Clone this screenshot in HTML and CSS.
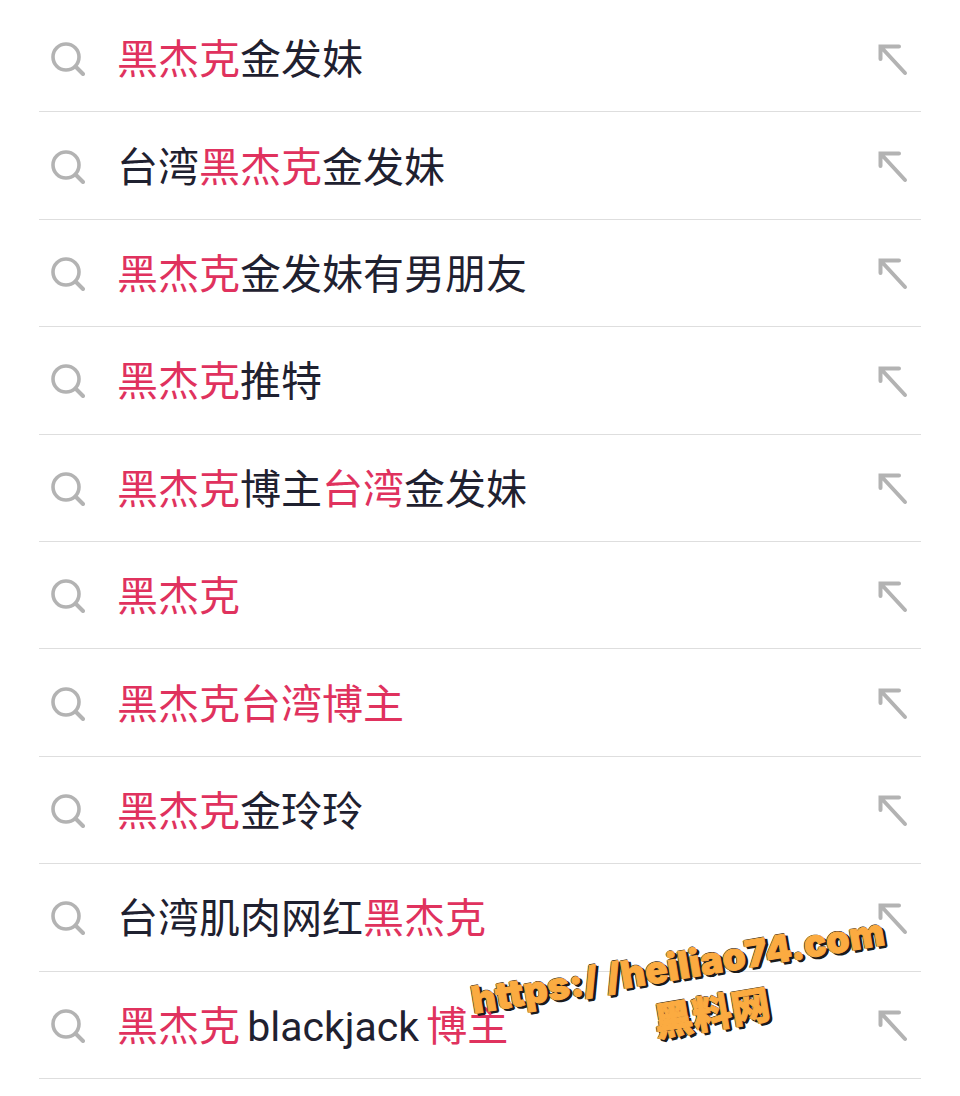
FILE: index.html
```html
<!DOCTYPE html>
<html lang="zh-CN">
<head>
    <meta charset="UTF-8">
    <title>搜索建议</title>
    <link rel="stylesheet" href="styles.css">
</head>
<body>
    <svg class="icon-defs" width="0" height="0">
        <symbol id="search" viewBox="0 0 34 34">
            <circle cx="15" cy="15" r="13" fill="none" stroke="currentColor" stroke-width="3.600"/>
            <path d="M25 25l7 7" fill="none" stroke="currentColor" stroke-width="4" stroke-linecap="round"/>
        </symbol>
        <symbol id="arrow" viewBox="0 0 32 32">
            <path d="M3.500 15V2.500H22M4 3L28 29" fill="none" stroke="currentColor" stroke-width="4" stroke-linecap="round"/>
        </symbol>
    </svg>

    <ul class="list">
        <li class="row"><svg class="ico-search"><use href="#search"/></svg><span class="text"><em>黑杰克</em>金发妹</span><svg class="ico-arrow"><use href="#arrow"/></svg></li>
        <li class="row"><svg class="ico-search"><use href="#search"/></svg><span class="text">台湾<em>黑杰克</em>金发妹</span><svg class="ico-arrow"><use href="#arrow"/></svg></li>
        <li class="row"><svg class="ico-search"><use href="#search"/></svg><span class="text"><em>黑杰克</em>金发妹有男朋友</span><svg class="ico-arrow"><use href="#arrow"/></svg></li>
        <li class="row"><svg class="ico-search"><use href="#search"/></svg><span class="text"><em>黑杰克</em>推特</span><svg class="ico-arrow"><use href="#arrow"/></svg></li>
        <li class="row"><svg class="ico-search"><use href="#search"/></svg><span class="text"><em>黑杰克</em>博主<em>台湾</em>金发妹</span><svg class="ico-arrow"><use href="#arrow"/></svg></li>
        <li class="row"><svg class="ico-search"><use href="#search"/></svg><span class="text"><em>黑杰克</em></span><svg class="ico-arrow"><use href="#arrow"/></svg></li>
        <li class="row"><svg class="ico-search"><use href="#search"/></svg><span class="text"><em>黑杰克台湾博主</em></span><svg class="ico-arrow"><use href="#arrow"/></svg></li>
        <li class="row"><svg class="ico-search"><use href="#search"/></svg><span class="text"><em>黑杰克</em>金玲玲</span><svg class="ico-arrow"><use href="#arrow"/></svg></li>
        <li class="row"><svg class="ico-search"><use href="#search"/></svg><span class="text">台湾肌肉网红<em>黑杰克</em></span><svg class="ico-arrow"><use href="#arrow"/></svg></li>
        <li class="row"><svg class="ico-search"><use href="#search"/></svg><span class="text"><em>黑杰克</em> blackjack <em>博主</em></span><svg class="ico-arrow"><use href="#arrow"/></svg></li>
    </ul>

    <div class="watermark">
        <div class="wm-url">https:/ /heiliao74.com</div>
        <div class="wm-name">黑料网</div>
    </div>
</body>
</html>
```

FILE: styles.css
```css
html, body {
    margin: 0;
    padding: 0;
    background: #fff;
    overflow: hidden;
}

body {
    width: 960px;
    height: 1096px;
    position: relative;
    font-family: Roboto, "Noto Sans CJK SC", sans-serif;
}

.icon-defs {
    position: absolute;
}

.list {
    list-style: none;
    margin: 0;
    padding: 5px 39px 0;
}

.row {
    display: flex;
    align-items: center;
    height: 106.4px;
    border-bottom: 1px solid #dedede;
    color: #b3b3b3;
}

.ico-search {
    width: 34px;
    height: 34px;
    margin-left: 12px;
    margin-top: 2px;
    flex: none;
}

.text {
    margin-left: 32px;
    flex: 1;
    font-size: 41px;
    line-height: 1;
    word-spacing: -3px;
    color: #1f2130;
    white-space: nowrap;
    margin-top: 5px;
}

.text em {
    font-style: normal;
    color: #e0325e;
}

.ico-arrow {
    width: 32px;
    height: 32px;
    margin-right: 12px;
    margin-top: 3px;
    flex: none;
}

.watermark {
    position: absolute;
    left: 462px;
    top: 942px;
    width: 440px;
    text-align: center;
    transform: rotate(-9.500deg);
    font-family: Inter, "Noto Sans CJK SC", sans-serif;
    font-weight: 900;
    color: #fbab41;
    -webkit-text-stroke: 1px #fbab41;
    text-shadow: 1px 1px 0 #1b1b1b, 2px 2px 0 #1b1b1b, 3px 2px 0 #1b1b1b, -1px 0 0 #1b1b1b, 0 -1px 0 #1b1b1b, 2px 3px 0 #1b1b1b;
}

.wm-url {
    font-size: 37.500px;
    line-height: 48px;
    white-space: nowrap;
}

.wm-name {
    font-size: 39px;
    line-height: 48px;
    margin-top: 4px;
    margin-left: 52px;
}
```
